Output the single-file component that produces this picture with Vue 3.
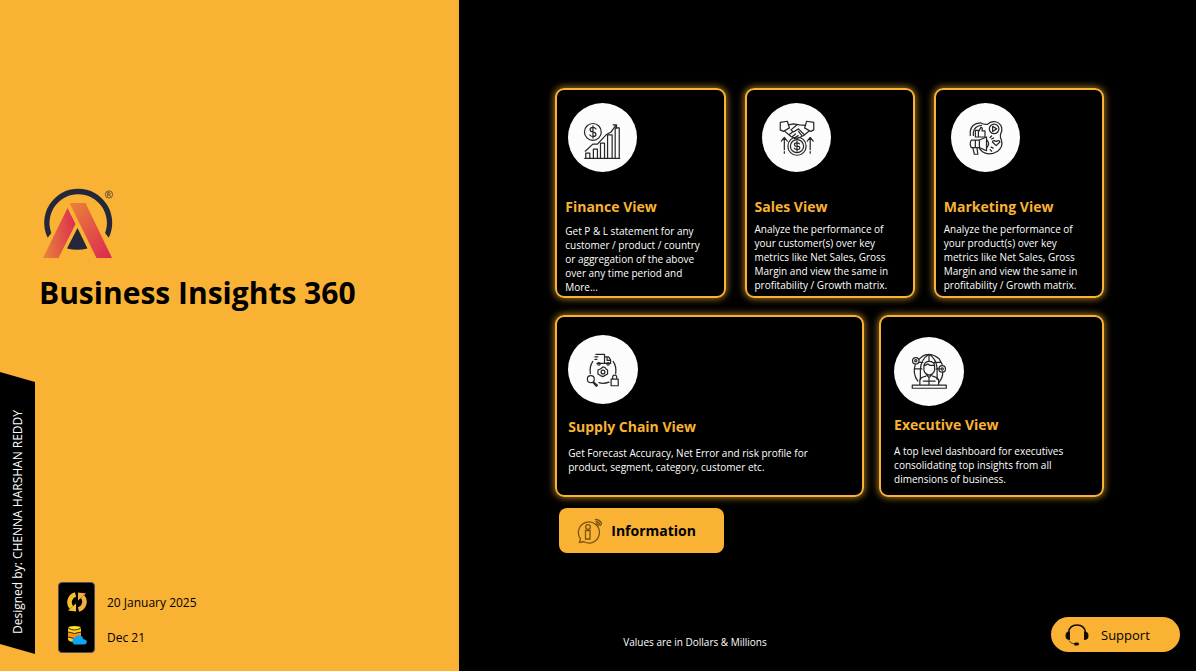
<script setup>
const topCards = [
  {
    id: 'finance',
    title: 'Finance View',
    lines: ['Get P & L statement for any', 'customer / product / country', 'or aggregation of the above', 'over any time period and', 'More...'],
  },
  {
    id: 'sales',
    title: 'Sales View',
    lines: ['Analyze the performance of', 'your customer(s) over key', 'metrics like Net Sales, Gross', 'Margin and view the same in', 'profitability / Growth matrix.'],
  },
  {
    id: 'marketing',
    title: 'Marketing View',
    lines: ['Analyze the performance of', 'your product(s) over key', 'metrics like Net Sales, Gross', 'Margin and view the same in', 'profitability / Growth matrix.'],
  },
]
const bottomCards = [
  {
    id: 'supply',
    title: 'Supply Chain View',
    lines: ['Get Forecast Accuracy, Net Error and risk profile for', 'product, segment, category, customer etc.'],
  },
  {
    id: 'executive',
    title: 'Executive View',
    lines: ['A top level dashboard for executives', 'consolidating top insights from all', 'dimensions of business.'],
  },
]
const rows = [
  { id: 'top', cards: topCards },
  { id: 'bottom', cards: bottomCards },
]
</script>

<template>
  <div class="page">
    <aside class="side">
      <header class="brand">
        <svg class="logo" viewBox="0 0 72 72" aria-hidden="true">
          <defs>
            <linearGradient id="legLeft" x1="0" y1="0.6" x2="1" y2="0.4">
              <stop offset="0" stop-color="#e8803a" />
              <stop offset="1" stop-color="#dd2f50" />
            </linearGradient>
            <linearGradient id="legRight" x1="0.1" y1="0" x2="0.9" y2="1">
              <stop offset="0" stop-color="#e8803a" />
              <stop offset="1" stop-color="#dc2b50" />
            </linearGradient>
          </defs>
          <path d="M4.700 49.800A34 34 0 1 1 65.700 49.800L62.100 45A28.700 28.700 0 1 0 8.300 45Z" fill="#24273a" />
          <path d="M34.500 40L44.500 60.500Q34.500 63 24 60.500Z" fill="#24273a" />
          <path d="M24.500 20L32.500 36L15.500 70H0Z" fill="url(#legLeft)" />
          <path d="M26.500 15H42.500L69 70H53.500Z" fill="url(#legRight)" />
          <g fill="none" stroke="#5f4a32" stroke-width="0.9">
            <circle cx="66" cy="6.500" r="3.600" />
            <path d="M64.700 8.600V4.600H66.200Q67.500 4.700 67.400 5.700T66.200 6.800H64.700M66.200 6.800L67.600 8.600" />
          </g>
        </svg>
        <h1>Business Insights 360</h1>
      </header>
      <div class="side-foot">
        <div class="ribbon"><span>Designed by: CHENNA HARSHAN REDDY</span></div>
        <div class="dates">
          <div class="date-icons">
            <svg class="refresh" viewBox="0 0 22 22" aria-hidden="true">
              <g fill="none" stroke-width="4.600">
                <path d="M9.500 3.500A8 8 0 0 0 5.500 16.500" stroke="#f3c02e" />
                <path d="M12.500 18.500A8 8 0 0 0 16.500 5.500" stroke="#f3ae45" />
              </g>
              <path d="M2 19.500L10 20.500V12.500Z" fill="#f3c02e" />
              <path d="M20 2.500L12 1.500V9.500Z" fill="#f3ae45" />
            </svg>
            <svg class="storage" viewBox="0 0 20 20" aria-hidden="true">
              <path d="M1 3V14Q1 17 7.500 17T14 14V3Z" fill="#fbd119" />
              <path d="M1 7Q7 10 14 7V12Q7 15 1 12Z" fill="#ff8f1c" />
              <ellipse cx="7.500" cy="3" rx="6.500" ry="2" fill="#ffe12b" />
              <path d="M1 3Q7.500 7 14 3M1 7Q7.500 10 14 7M1 12Q7.500 15 14 12" fill="none" stroke="#392600" stroke-width="1" />
              <path d="M7.500 19.500A3.500 3.500 0 0 1 7.500 13Q9 9.500 13 10.500Q16 11.300 16 14Q20 14.500 19.800 17T16.500 19.500Z" fill="#0da6f2" />
            </svg>
          </div>
          <div class="date-text">
            <span>20 January 2025</span>
            <span>Dec 21</span>
          </div>
        </div>
      </div>
    </aside>

    <main class="main">
      <div v-for="row in rows" :key="row.id" class="row" :class="row.id">
        <a v-for="card in row.cards" :key="card.id" href="#" class="card" :class="card.id">
          <span class="disc">
            <svg v-if="card.id === 'finance'" viewBox="0 0 68 68" aria-hidden="true">
              <g class="ink">
                <circle cx="24.500" cy="28.500" r="8.300" />
                <path d="M27.500 25.500Q26.500 24 24.500 24Q21.800 24 21.800 26.200T24.700 28.600T27.500 31Q27.500 33 24.600 33Q22.400 33 21.500 31.500M24.600 22.500V34.600" />
                <path d="M17.500 54.500V49.500H21.500V54.500M25 54.500V45.500H29V54.500M32 54.500V39.500H36V54.500M39 54.500V31.500H43.500V54.500M46.500 54.500V24.500H50.500V54.500M16.500 54.500H51" />
                <path d="M17 47.500L24.500 40.500H29L38 31L42.500 28.500L47.500 21.500M44.500 21.500H47.800V24.800" />
              </g>
            </svg>
            <svg v-else-if="card.id === 'sales'" viewBox="0 0 68 68" aria-hidden="true">
              <g class="ink">
                <path d="M18 19L25 18L27 24.500L21 28L18 26.500ZM51 19L44 18L42 24.500L48 28L51 26.500Z" />
                <path d="M26 21.500L31 20.500L37 21.500L43 22M22 27.500L28.500 33L34 35.500L41 32L46.500 27.500M34 22L28.500 26.500L31 28.500L36 25.500L42 31.500M27 31L30 28.500M29.500 33.500L33 30.500M32 35L35.500 32M36 28L39.500 32.500" />
                <circle cx="34.500" cy="42.500" r="9" /><circle cx="34.500" cy="42.500" r="6.500" />
                <path d="M37 40.300Q36 39.200 34.500 39.200Q32 39.200 32 41T34.600 42.600T37.200 44.300Q37 46 34.600 46Q32.600 46 31.800 44.600M34.500 37.500V47.500" />
                <path d="M22 46V34M19 37.500L22 34L25 37.500M47.500 46V34M44.500 37.500L47.500 34L50.500 37.500M22 48V49.500M47.500 48V49.500" />
              </g>
            </svg>
            <svg v-else-if="card.id === 'marketing'" viewBox="0 0 68 68" aria-hidden="true">
              <g class="ink">
                <path d="M19 32V28Q20 20 29 19.500Q32 21.500 36 21Q39 17.500 44 18.500Q51 20.500 50 28Q47.500 32 49.500 36Q52 43 46 47.500Q38 52.500 31 48L28 45" />
                <path d="M22 32V29Q23 22.500 30 22" />
                <circle cx="42.500" cy="25.500" r="4.700" /><path d="M41 23V28L45 25.500ZM24 27H27V33.500H24ZM27 28.500L29.500 24Q31.500 24 30.500 27.500H33.500V33.500H27" />
                <path d="M20 36.500H28L35 33.500V47L28 44H20Q18 40 20 36.500ZM28 36.500V44M35 36Q39 40 35 44.500M21.500 44L23 50.500H26.500L25.500 44M24 36.500V44" />
                <path d="M44.500 42L40.800 38.500Q41.500 35.800 44.500 38Q47.500 35.800 48.200 38.500ZM38.500 34L40 32.500M38.500 46L40 47.500M40 35.500L42 34.500M39.500 43.500L41.500 44.500" />
              </g>
            </svg>
            <svg v-else-if="card.id === 'supply'" viewBox="0 0 68 68" aria-hidden="true">
              <g class="ink">
                <path d="M27 19H35.500V28H28M26 21.500H29M26 24H28M35.500 21.500H39.500L41.500 24.500V28H35.500M38 21.500V25H41.500" />
                <circle cx="30" cy="28.500" r="1.200" /><circle cx="39" cy="28.500" r="1.200" />
                <path d="M34 31.500L36 32L37 33.500L38.500 34.500V38.500L36.500 39.500L34 41L31.500 40L29 38.500V34.500L31.500 33.500Z" /><circle cx="34" cy="36.500" r="1.900" />
                <path d="M24 26Q20.500 31 21.500 38M44 26Q47.500 31 46.500 38M30 47Q34.500 48.500 40 46.500" />
                <circle cx="22" cy="43.500" r="3.400" /><path d="M24.500 46L28.500 49.500L27.500 50.500L24 47" />
                <path d="M42 43.500H49V50H42ZM43.500 43.500Q43 39.500 45.500 39.500T47.500 43.500" />
              </g>
            </svg>
            <svg v-else viewBox="0 0 68 68" aria-hidden="true">
              <g class="ink">
                <path d="M24 22Q33 12.500 44 21.500L47 27M20.500 27Q17.500 36 23 43.500M47.500 34Q48 40 43.500 45M34 17V24M34 17Q26 22 25.500 32V42M34 17Q41 21 42 31V42M24 25H28M39 25H46M20 31.500H27M41 31.500H45" />
                <circle cx="21" cy="23.500" r="3.200" /><circle cx="21" cy="23.500" r="1.100" /><circle cx="47" cy="31.500" r="3.200" /><circle cx="47" cy="31.500" r="1.100" />
                <path d="M29 28Q30 24 34 24Q39 24 39.500 28V33Q38 37 34 37.500Q30 36.500 29 33ZM30 28L33 26.500L35 28H39M31.500 37L34 40L37 37M34 40V47M25 47V42Q26 39.500 31 38.500M43.500 47V42Q42 39.500 37.500 38.500M28.500 43.500H33M35 43.500H40M17.500 47.500H51V50.500H17.500Z" />
              </g>
            </svg>
          </span>
          <h2>{{ card.title }}</h2>
          <p><span v-for="line in card.lines" :key="line">{{ line }}</span></p>
        </a>
      </div>

      <button type="button" class="info">
        <svg viewBox="0 0 26 26" aria-hidden="true">
          <g fill="none" stroke="#7b5413" stroke-width="1.300">
            <path d="M3.500 24.500L4.500 20.800A10.500 10.500 0 1 1 8 23.800Z" />
            <circle cx="12" cy="9" r="2.300" />
            <path d="M9.500 12.500H14V21H9.500ZM20 5.500Q22 6 22.500 8M19.500 3.500Q23.500 4 24.500 8M19 1.500Q25 1.500 26 7" />
          </g>
        </svg>
        Information
      </button>

      <footer class="foot">
        <p>Values are in Dollars &amp; Millions</p>
        <button type="button" class="support">
          <svg viewBox="0 0 24 24" aria-hidden="true">
            <path d="M3.500 11V9.500Q4.500 2 12 2T20.500 9.500V11" fill="none" stroke="#130e05" stroke-width="1.600" />
            <path d="M5 8.500V17Q.5 17 .5 12.700T5 8.500ZM19 8.500V17Q23.500 17 23.500 12.700T19 8.500Z" fill="#130e05" />
            <path d="M4 17.500Q5.500 20.800 9.500 21" fill="none" stroke="#5f4312" stroke-width="1" />
            <rect x="9" y="19.500" width="5" height="3" rx="1.500" fill="#130e05" />
          </svg>
          Support
        </button>
      </footer>
    </main>
  </div>
</template>

<style>
body {
  margin: 0;
  background: #000;
}
</style>

<style scoped>
.page {
  display: flex;
  min-height: 100vh;
  font-family: "Open Sans", "Noto Sans", sans-serif;
  color: #fff;
  background: #000;
}
h1, h2, p {
  margin: 0;
}
svg {
  display: block;
}
button {
  font-family: inherit;
  border: 0;
  background: #f9b233;
  color: #000;
  cursor: pointer;
}
.side {
  flex: 0 0 38.4%;
  box-sizing: border-box;
  display: flex;
  flex-direction: column;
  justify-content: space-between;
  padding: 188px 0 17px;
  background: #f9b233;
  color: #000;
}
.brand {
  padding-left: 39px;
}
.logo {
  width: 72px;
  height: 72px;
  margin-left: 4px;
}
h1 {
  margin-top: 12px;
  font-size: 30px;
  line-height: 42px;
  font-weight: 700;
  white-space: nowrap;
}
.side-foot {
  display: flex;
  align-items: flex-end;
  gap: 23px;
}
.ribbon {
  width: 35px;
  height: 282px;
  box-sizing: border-box;
  padding: 0 0 20px;
  display: flex;
  align-items: flex-end;
  justify-content: center;
  background: #000;
  color: #fff;
  clip-path: polygon(0 0, 100% 10px, 100% 100%, 0 calc(100% - 10px));
}
.ribbon span {
  writing-mode: vertical-rl;
  transform: rotate(180deg);
  font-size: 12px;
  line-height: 16px;
  white-space: nowrap;
}
.dates {
  display: flex;
  gap: 12px;
  padding-bottom: 1px;
}
.date-icons {
  width: 37px;
  height: 71px;
  box-sizing: border-box;
  display: flex;
  flex-direction: column;
  align-items: center;
  gap: 12px;
  padding-top: 8px;
  border: 1px solid #4c4f58;
  border-radius: 4px;
  background: #000;
}
.refresh {
  width: 22px;
  height: 22px;
}
.storage {
  width: 20px;
  height: 20px;
}
.date-text {
  display: flex;
  flex-direction: column;
  gap: 19px;
  padding-top: 13px;
  font-size: 12px;
  line-height: 16px;
}
.main {
  flex: 1;
  display: flex;
  flex-direction: column;
  align-items: stretch;
  padding: 88px 92px 19px 96px;
}
.row {
  display: grid;
}
.top {
  grid-template-columns: repeat(3, 1fr);
  gap: 19px;
}
.bottom {
  grid-template-columns: 309fr 225fr;
  gap: 15px;
  margin-top: 17px;
}
.card {
  box-sizing: border-box;
  min-height: 210px;
  padding: 13px 0 0 8px;
  border: 2px solid #f9b233;
  border-radius: 9px;
  box-shadow: 0 0 7px 1px rgba(249, 178, 51, 0.65);
  color: #fff;
  text-decoration: none;
}
.bottom .card {
  min-height: 182px;
  padding: 18px 0 0 11px;
}
.bottom .executive {
  padding: 20px 0 0 13px;
}
.disc {
  display: block;
  width: 69px;
  height: 69px;
  border-radius: 50%;
  background: #fcfcfc;
}
.top .disc {
  margin-left: 7px;
}
.top .finance .disc {
  margin-left: 3px;
}
.bottom .disc {
  width: 70px;
}
.disc svg {
  width: 100%;
  height: 100%;
}
.ink {
  fill: none;
  stroke: #262626;
  stroke-width: 1.2;
  stroke-linecap: round;
  stroke-linejoin: round;
}
h2 {
  font-size: 14px;
  line-height: 20px;
  font-weight: 700;
  color: #f9b233;
  white-space: nowrap;
}
.top h2 {
  margin-top: 25px;
}
.bottom h2 {
  margin-top: 13px;
}
.bottom .executive h2 {
  margin-top: 9px;
}
.card p {
  margin-top: 5px;
  font-size: 10px;
  line-height: 14px;
  white-space: nowrap;
}
.card p span {
  display: block;
}
.finance p {
  margin-top: 7px;
}
.bottom .card p {
  margin-top: 9px;
}
.info {
  align-self: flex-start;
  display: flex;
  align-items: center;
  gap: 9px;
  width: 165px;
  height: 45px;
  margin: 11px 0 0 4px;
  padding: 0 0 0 17px;
  border-radius: 8px;
  font-size: 14px;
  font-weight: 700;
}
.info svg {
  width: 26px;
  height: 26px;
}
.foot {
  display: flex;
  align-items: center;
  justify-content: space-between;
  margin-top: auto;
  margin-right: -76px;
  padding-left: 68px;
}
.foot p {
  padding-top: 14px;
  font-size: 10px;
  line-height: 16px;
}
.support {
  display: flex;
  align-items: center;
  gap: 12px;
  width: 129px;
  height: 35px;
  padding: 0 0 0 14px;
  border-radius: 18px;
  font-size: 13px;
}
.support svg {
  width: 24px;
  height: 24px;
}
</style>
